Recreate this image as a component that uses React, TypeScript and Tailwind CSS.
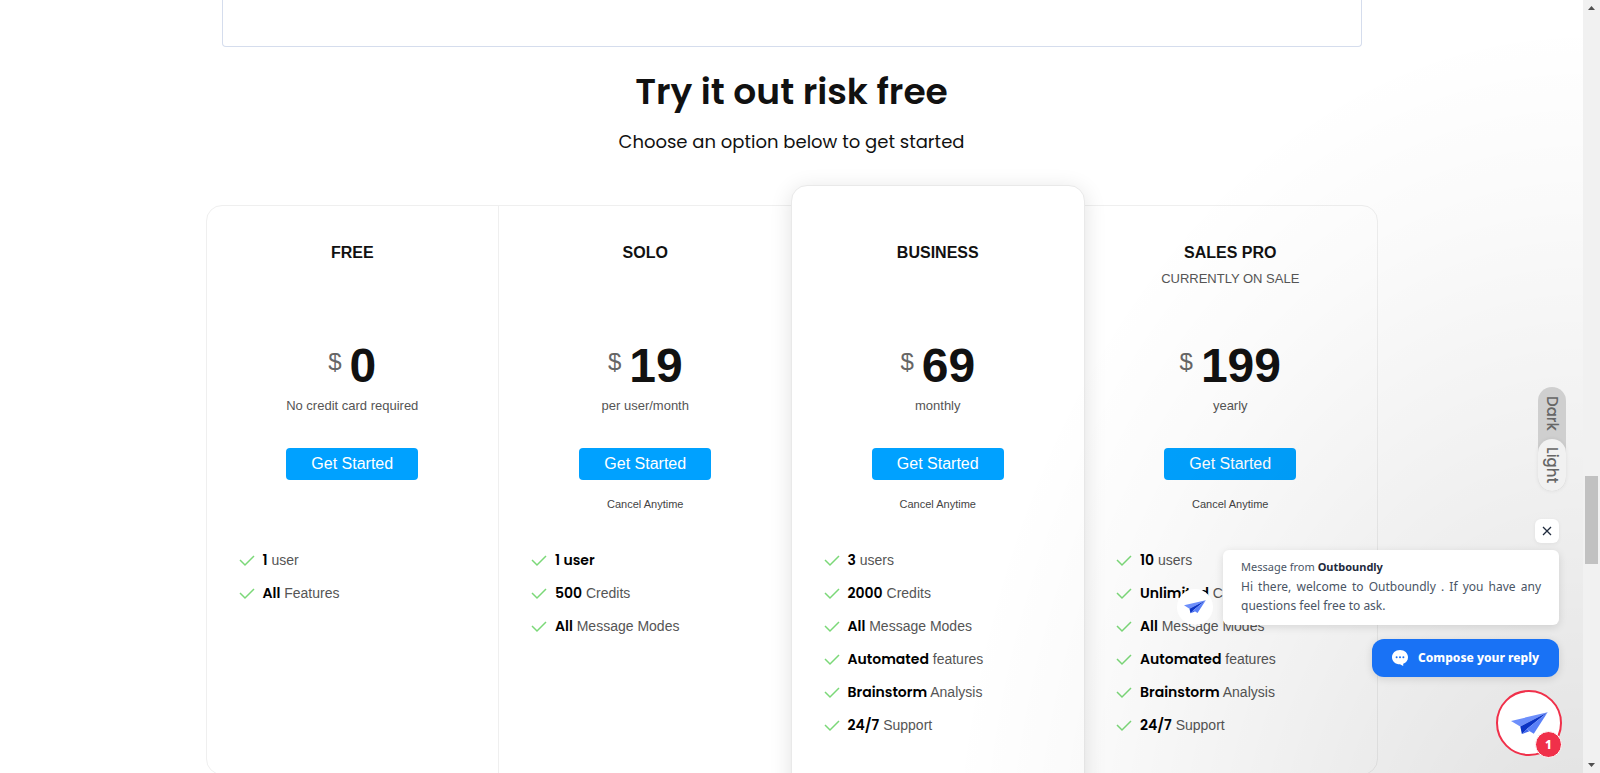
import { useState } from 'react'

interface Feature {
  strong: string
  text?: string
}

interface Plan {
  name: string
  subtitle?: string
  price: string
  period: string
  note?: string
  featured?: boolean
  features: Feature[]
}

const plans: Plan[] = [
  {
    name: 'FREE',
    price: '0',
    period: 'No credit card required',
    features: [
      { strong: '1', text: 'user' },
      { strong: 'All', text: 'Features' }
    ]
  },
  {
    name: 'SOLO',
    price: '19',
    period: 'per user/month',
    note: 'Cancel Anytime',
    features: [
      { strong: '1 user' },
      { strong: '500', text: 'Credits' },
      { strong: 'All', text: 'Message Modes' }
    ]
  },
  {
    name: 'BUSINESS',
    price: '69',
    period: 'monthly',
    note: 'Cancel Anytime',
    featured: true,
    features: [
      { strong: '3', text: 'users' },
      { strong: '2000', text: 'Credits' },
      { strong: 'All', text: 'Message Modes' },
      { strong: 'Automated', text: 'features' },
      { strong: 'Brainstorm', text: 'Analysis' },
      { strong: '24/7', text: 'Support' }
    ]
  },
  {
    name: 'SALES PRO',
    subtitle: 'CURRENTLY ON SALE',
    price: '199',
    period: 'yearly',
    note: 'Cancel Anytime',
    features: [
      { strong: '10', text: 'users' },
      { strong: 'Unlimited', text: 'Credits' },
      { strong: 'All', text: 'Message Modes' },
      { strong: 'Automated', text: 'features' },
      { strong: 'Brainstorm', text: 'Analysis' },
      { strong: '24/7', text: 'Support' }
    ]
  }
]

function PaperPlane({ className }: { className: string }) {
  return (
    <svg className={className} viewBox="0 0 112 68" aria-hidden="true">
      <path d="M0 27 L111 1 L28 44 Z" fill="#6d8ffb" />
      <path d="M28 44 L111 1 L49 51 L33 67 Z" fill="#0b33c4" />
      <path d="M111 1 L69 66 L47 52 Z" fill="#5a80f8" />
      <path d="M33 67 L47 52 L56 58 Z" fill="#3f66ee" />
    </svg>
  )
}

function PlanColumn({ plan, divided }: { plan: Plan; divided: boolean }) {
  return (
    <div
      className={
        plan.featured
          ? 'relative -mx-px -mt-[21px] -mb-10 rounded-2xl border border-[#e9e9e9] bg-white px-8 pt-[55px] shadow-[0_4px_22px_rgba(0,0,0,0.12)]'
          : `px-8 pt-[35px] ${divided ? 'border-r border-[#efefef]' : ''}`
      }
    >
      <div className="flex flex-col items-center text-center">
        <h3 className="text-[16px] leading-6 font-bold text-[#111]">{plan.name}</h3>
        <p className="mt-1 h-5 text-[13px] leading-5 text-[#555]">{plan.subtitle}</p>
        <div className="mt-12 flex items-start gap-2">
          <span className="text-[24px] leading-[50px] text-[#666]">$</span>
          <span className="text-[48px] leading-[58px] font-bold text-[#111]">{plan.price}</span>
        </div>
        <p className="mt-px text-[13px] leading-5 text-[#555]">{plan.period}</p>
        <button className="mt-8 h-8 w-[132px] rounded bg-[#00a1ff] pb-px text-[16px] text-white">
          Get Started
        </button>
        <p className="mt-4 h-4 text-[11px] leading-4 text-[#444]">{plan.note}</p>
      </div>
      <ul className="mt-8 pb-8 text-[14px] leading-[33px] text-[#555]">
        {plan.features.map((feature) => (
          <li key={feature.strong} className="flex items-center gap-2 whitespace-nowrap">
            <svg className="h-3 w-4 shrink-0" viewBox="0 0 16 12" fill="none" stroke="#7bd878" strokeWidth="1.5">
              <path d="M1 5 L6 10 L15 1" />
            </svg>
            <span>
              <strong className="font-[Poppins,Inter,sans-serif] font-semibold text-black">{feature.strong}</strong>{' '}
              {feature.text}
            </span>
          </li>
        ))}
      </ul>
    </div>
  )
}

function ThemeToggle() {
  const [theme, setTheme] = useState('light')

  return (
    <div className="absolute top-[387px] right-[17px] flex w-7 flex-col rounded-full bg-[#cfcfcf] font-[Poppins,Inter,sans-serif] text-[15px] font-medium text-[#666]">
      <button
        onClick={() => setTheme('dark')}
        className={`flex h-[52px] w-7 items-center justify-center rounded-full [writing-mode:vertical-rl] ${
          theme === 'dark' ? 'bg-[#f1f1f1]' : ''
        }`}
      >
        Dark
      </button>
      <button
        onClick={() => setTheme('light')}
        className={`flex h-[52px] w-7 items-center justify-center rounded-full [writing-mode:vertical-rl] ${
          theme === 'light' ? 'bg-[#f1f1f1] shadow-[0_0_4px_rgba(0,0,0,0.08)]' : ''
        }`}
      >
        Light
      </button>
    </div>
  )
}

function ChatWidget() {
  const [open, setOpen] = useState(true)

  return (
    <div className="absolute right-[21px] bottom-[15px] flex flex-col items-end font-['Noto_Sans',sans-serif]">
      {open && (
        <div className="mr-[3px] flex flex-col items-end">
          <button
            aria-label="Close"
            onClick={() => setOpen(false)}
            className="flex size-6 items-center justify-center rounded-md bg-white shadow-[0_1px_4px_rgba(0,0,0,0.06)]"
          >
            <svg className="size-2.5" viewBox="0 0 10 10" stroke="#1f2b3d" strokeWidth="1.3">
              <path d="M1 1 L9 9 M9 1 L1 9" />
            </svg>
          </button>
          <div className="mt-[7px] flex items-end gap-2.5">
            <div className="flex size-9 items-center justify-center rounded-full bg-white">
              <PaperPlane className="w-[22px]" />
            </div>
            <div className="h-[75px] w-[336px] rounded-md bg-white px-[18px] pt-2 text-[#4a5565] shadow-[0_2px_8px_rgba(0,0,0,0.12)]">
              <p className="text-[11px] leading-[18px]">
                Message from <strong className="font-bold text-[#1f2b3d]">Outboundly</strong>
              </p>
              <p className="pt-px text-justify text-[12px] leading-[19px]">
                Hi there, welcome to Outboundly . If you have any questions feel free to ask.
              </p>
            </div>
          </div>
          <button className="mt-3.5 flex h-[38px] items-center gap-2.5 rounded-xl bg-[#1972f5] px-5 text-[12px] font-extrabold text-white shadow-[0_2px_8px_rgba(0,0,0,0.12)]">
            <svg className="size-4" viewBox="0 0 16 16">
              <path d="M8 0 C3.4 0 0 3.2 0 7.2 C0 11.3 3.3 14.2 8 14.3 L11.2 16 V13.8 C14.3 12.6 16 10.2 16 7.2 C16 3.2 12.6 0 8 0 Z" fill="#fff" />
              <g fill="#1972f5">
                <circle cx="4.6" cy="7.2" r="1" />
                <circle cx="8" cy="7.2" r="1" />
                <circle cx="11.4" cy="7.2" r="1" />
              </g>
            </svg>
            Compose your reply
          </button>
        </div>
      )}
      <button
        aria-label="Open chat, 1 unread message"
        className="relative mt-[13px] mb-0.5 flex size-[66px] items-center justify-center rounded-full border-2 border-[#f0304a] bg-white"
      >
        <PaperPlane className="w-[37px]" />
        <span className="absolute -right-0.5 -bottom-1 flex size-[27px] items-center justify-center rounded-full border border-white bg-[#f0304a] text-[12px] font-extrabold text-white">
          1
        </span>
      </button>
    </div>
  )
}

function ScrollTrack() {
  return (
    <div className="flex w-[17px] shrink-0 flex-col items-center bg-[#f1f1f1] py-1.5">
      <svg className="h-1 w-[7px]" viewBox="0 0 7 4" fill="#505050">
        <path d="M0 4 L3.5 0 L7 4 Z" />
      </svg>
      <div className="mt-[466px] h-[88px] w-[13px] bg-[#c1c1c1]"></div>
      <svg className="mt-auto h-1 w-[7px]" viewBox="0 0 7 4" fill="#505050">
        <path d="M0 0 L3.5 4 L7 0 Z" />
      </svg>
    </div>
  )
}

function App() {
  return (
    <div className="flex h-screen overflow-hidden bg-white font-['Liberation_Sans',Arial,sans-serif]">
      <main className="relative flex-1 overflow-hidden">
        <div className="mx-auto h-[47px] max-w-[1140px] rounded-b border border-t-0 border-[#d5dded]"></div>

        {/* Heading */}
        <div className="text-center font-[Poppins,Inter,sans-serif] text-[#111]">
          <h2 className="mt-[23px] text-[36px] leading-11 font-semibold">Try it out risk free</h2>
          <p className="mt-[14px] text-[18px] leading-7">Choose an option below to get started</p>
        </div>

        {/* Pricing table */}
        <div className="mx-auto mt-[49px] grid max-w-[1172px] grid-cols-4 rounded-2xl border border-[#efefef]">
          {plans.map((plan, index) => (
            <PlanColumn key={plan.name} plan={plan} divided={index === 0} />
          ))}
        </div>

        {/* Grey shade in the corner */}
        <div className="pointer-events-none absolute inset-0 bg-[radial-gradient(640px_900px_at_100%_920px,rgba(0,0,0,0.13),rgba(0,0,0,0.06)_50%,rgba(0,0,0,0.02)_80%,transparent)]"></div>

        <ThemeToggle />
        <ChatWidget />
      </main>
      <ScrollTrack />
    </div>
  )
}

export default App
